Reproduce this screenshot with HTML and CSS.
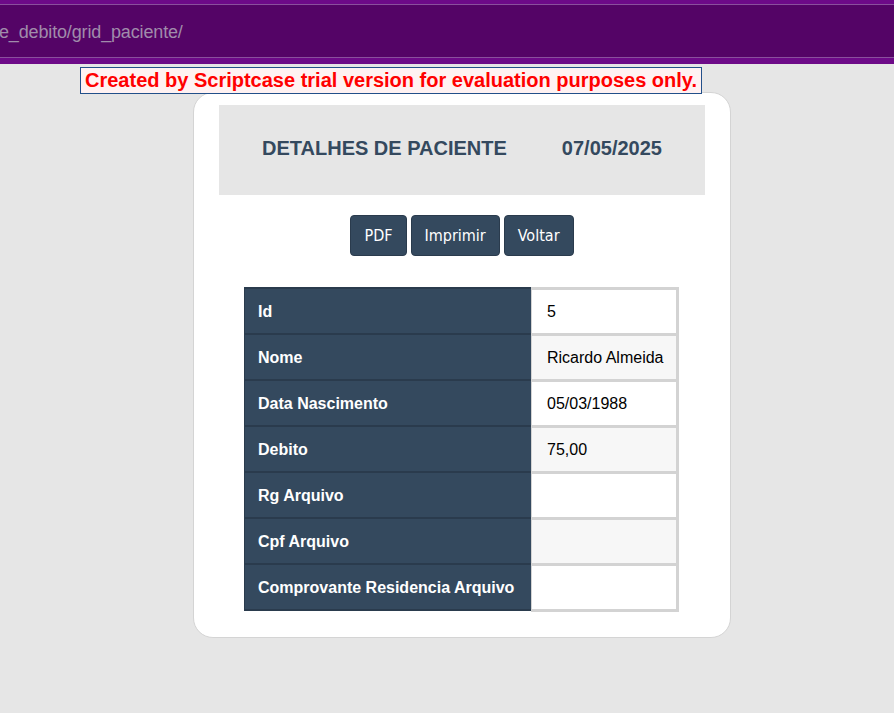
FILE: index.html
```html
<!DOCTYPE html>
<html lang="pt">
<head>
<meta charset="utf-8">
<title>Detalhes de Paciente</title>
<link rel="stylesheet" href="styles.css">
</head>
<body>
<div class="topbar">
  <div class="urlbar"><span class="url">e_debito/grid_paciente/</span></div>
</div>
<div class="page">
  <div class="watermark">Created by Scriptcase trial version for evaluation purposes only.</div>
  <div class="card">
    <div class="header">
      <span>DETALHES DE PACIENTE</span>
      <span>07/05/2025</span>
    </div>
    <div class="toolbar">
      <button class="btn">PDF</button>
      <button class="btn">Imprimir</button>
      <button class="btn">Voltar</button>
    </div>
    <div class="details">
      <div class="lbl">Id</div><div class="val">5</div>
      <div class="lbl">Nome</div><div class="val alt">Ricardo Almeida</div>
      <div class="lbl">Data Nascimento</div><div class="val">05/03/1988</div>
      <div class="lbl">Debito</div><div class="val alt">75,00</div>
      <div class="lbl">Rg Arquivo</div><div class="val"></div>
      <div class="lbl">Cpf Arquivo</div><div class="val alt"></div>
      <div class="lbl last">Comprovante Residencia Arquivo</div><div class="val last"></div>
    </div>
  </div>
</div>
</body>
</html>
```

FILE: styles.css
```css
html, body {
  margin: 0;
  padding: 0;
}
body {
  background: #e6e6e6;
  font-family: "Liberation Sans", Arial, sans-serif;
}
.topbar {
  background: #6d0a88;
  padding: 4px 0 6px;
}
.urlbar {
  background: #540466;
  border-top: 1px solid #8a4f9d;
  border-bottom: 1px solid #8a4f9d;
  height: 52px;
  display: flex;
  align-items: center;
}
.url {
  color: #a08cab;
  font-size: 18px;
  margin-top: 2px;
  margin-left: -1px;
  letter-spacing: -0.15px;
}
.page {
  padding-top: 3px;
}
.watermark {
  display: inline-block;
  margin-left: 80px;
  border: 1px solid #22508a;
  background: #fff2f2;
  color: #ff0000;
  font-weight: bold;
  font-size: 20px;
  line-height: 25px;
  padding: 0 4px;
  position: relative;
  z-index: 1;
  vertical-align: top;
}
.card {
  margin: -2px 0 0 193px;
  width: 538px;
  box-sizing: border-box;
  background: #ffffff;
  border: 1px solid #d4d4d4;
  border-radius: 20px;
  padding: 12px 25px 25px;
}
.header {
  height: 90px;
  background: #e6e6e6;
  display: flex;
  justify-content: center;
  align-items: center;
  gap: 55px;
  color: #34495e;
  font-weight: bold;
  font-size: 20px;
  padding-bottom: 4px;
  box-sizing: border-box;
}
.toolbar {
  margin-top: 20px;
  display: flex;
  justify-content: center;
  gap: 4px;
}
.btn {
  height: 41px;
  background: #34495e;
  border: 1px solid #2a3b4d;
  border-radius: 4px;
  color: #ffffff;
  font-family: "DejaVu Sans Condensed", "DejaVu Sans", sans-serif;
  font-stretch: condensed;
  font-size: 16px;
  padding: 0 13px;
  cursor: pointer;
}
.details {
  display: grid;
  grid-template-columns: 287px 148px;
  width: 435px;
  margin: 31px 0 0 25px;
}
.lbl, .val {
  height: 46px;
  box-sizing: border-box;
  display: flex;
  align-items: center;
  font-size: 16px;
  padding-top: 1px;
}
.lbl {
  background: #34495e;
  border-top: 2px solid #2a3b4d;
  border-left: 1px solid #2a3b4d;
  padding-left: 13px;
  color: #ffffff;
  font-weight: bold;
}
.val {
  background: #ffffff;
  border: 3px solid #d3d3d3;
  border-bottom: 0;
  border-left-width: 1px;
  padding-left: 15px;
  color: #000000;
}
.val.alt {
  background: #f7f7f7;
}
.lbl.last {
  height: 48px;
  border-bottom: 2px solid #2a3b4d;
}
.val.last {
  height: 49px;
  border-bottom: 3px solid #d3d3d3;
}
```
